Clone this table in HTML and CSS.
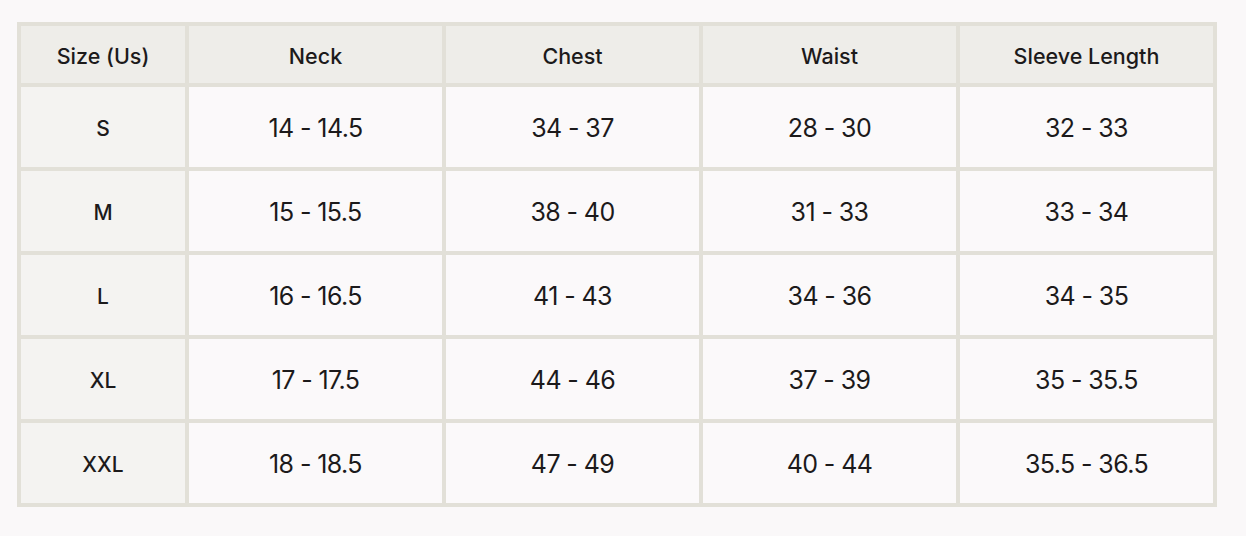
FILE: index.html
```html
<!DOCTYPE html>
<html>
<head>
<meta charset="utf-8">
<link rel="stylesheet" href="styles.css">
</head>
<body>
<div class="chart">
  <div class="cell head">Size (Us)</div>
  <div class="cell head">Neck</div>
  <div class="cell head">Chest</div>
  <div class="cell head">Waist</div>
  <div class="cell head">Sleeve Length</div>

  <div class="cell size">S</div>
  <div class="cell val">14 - 14.5</div>
  <div class="cell val">34 - 37</div>
  <div class="cell val">28 - 30</div>
  <div class="cell val">32 - 33</div>

  <div class="cell size">M</div>
  <div class="cell val">15 - 15.5</div>
  <div class="cell val">38 - 40</div>
  <div class="cell val">31 - 33</div>
  <div class="cell val">33 - 34</div>

  <div class="cell size">L</div>
  <div class="cell val">16 - 16.5</div>
  <div class="cell val">41 - 43</div>
  <div class="cell val">34 - 36</div>
  <div class="cell val">34 - 35</div>

  <div class="cell size">XL</div>
  <div class="cell val">17 - 17.5</div>
  <div class="cell val">44 - 46</div>
  <div class="cell val">37 - 39</div>
  <div class="cell val">35 - 35.5</div>

  <div class="cell size">XXL</div>
  <div class="cell val">18 - 18.5</div>
  <div class="cell val">47 - 49</div>
  <div class="cell val">40 - 44</div>
  <div class="cell val">35.5 - 36.5</div>
</div>
</body>
</html>
```
FILE: styles.css
```css
html, body {
  margin: 0;
  background: #faf8f9;
}
body {
  padding: 22px 0 0 17px;
  font-family: Inter, "Liberation Sans", sans-serif;
  color: #1c1a1b;
}
.chart {
  display: grid;
  grid-template-columns: 164px repeat(4, 253px);
  grid-template-rows: 57px repeat(5, 80px);
  gap: 4px;
  padding: 4px;
  width: max-content;
  background: #e2e0d8;
}
.cell {
  display: flex;
  align-items: center;
  justify-content: center;
  padding-top: 2px;
  background: #fbf9fa;
}
.head {
  background: #eeede9;
  font-size: 21.5px;
  font-weight: 500;
  letter-spacing: 0;
}
.size {
  background: #f4f3f1;
  font-size: 21px;
  font-weight: 500;
}
.val {
  font-size: 25px;
  letter-spacing: -0.6px;
}
```
